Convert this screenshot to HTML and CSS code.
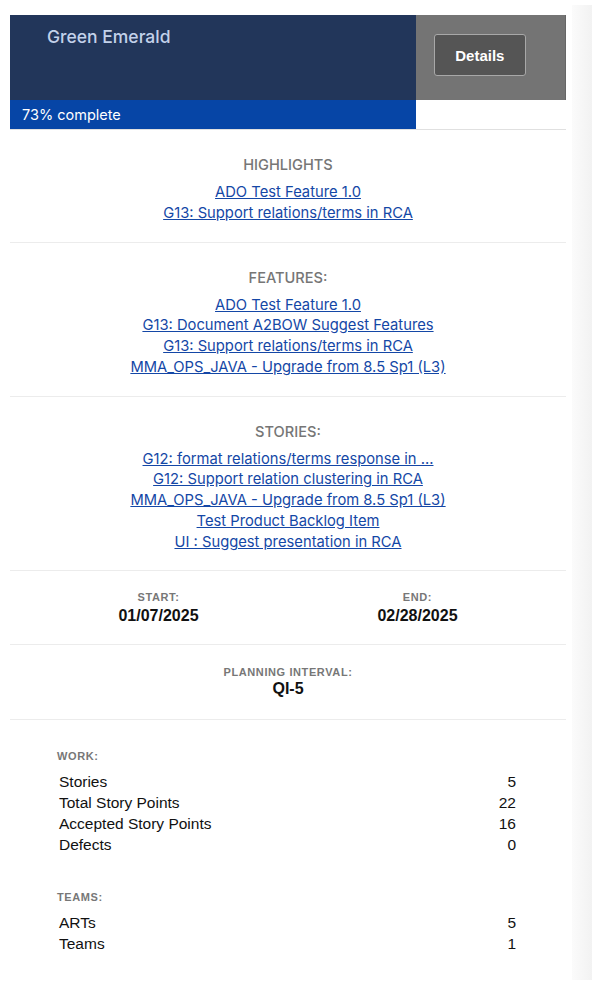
FILE: index.html
```html
<!DOCTYPE html>
<html lang="en">
<head>
<meta charset="utf-8">
<title>Green Emerald</title>
<link rel="stylesheet" href="styles.css">
</head>
<body>
<div class="page">
  <main class="card">
    <header class="header">
      <div class="title">Green Emerald</div>
      <div class="actions"><button class="btn" type="button">Details</button></div>
    </header>
    <div class="progress">
      <div class="bar" style="width: 73%">73% complete</div>
    </div>

    <section class="block">
      <h2 class="heading">HIGHLIGHTS</h2>
      <ul class="links">
        <li><a href="#">ADO Test Feature 1.0</a></li>
        <li><a href="#">G13: Support relations/terms in RCA</a></li>
      </ul>
    </section>

    <section class="block">
      <h2 class="heading">FEATURES:</h2>
      <ul class="links">
        <li><a href="#">ADO Test Feature 1.0</a></li>
        <li><a href="#">G13: Document A2BOW Suggest Features</a></li>
        <li><a href="#">G13: Support relations/terms in RCA</a></li>
        <li><a href="#">MMA_OPS_JAVA - Upgrade from 8.5 Sp1 (L3)</a></li>
      </ul>
    </section>

    <section class="block">
      <h2 class="heading">STORIES:</h2>
      <ul class="links">
        <li><a href="#">G12: format relations/terms response in ...</a></li>
        <li><a href="#">G12: Support relation clustering in RCA</a></li>
        <li><a href="#">MMA_OPS_JAVA - Upgrade from 8.5 Sp1 (L3)</a></li>
        <li><a href="#">Test Product Backlog Item</a></li>
        <li><a href="#">UI : Suggest presentation in RCA</a></li>
      </ul>
    </section>

    <section class="dates">
      <div class="field">
        <div class="label">START:</div>
        <div class="value">01/07/2025</div>
      </div>
      <div class="field">
        <div class="label">END:</div>
        <div class="value">02/28/2025</div>
      </div>
    </section>

    <section class="interval">
      <div class="field">
        <div class="label">PLANNING INTERVAL:</div>
        <div class="value">QI-5</div>
      </div>
    </section>

    <section class="stats">
      <div class="group">
        <div class="label">WORK:</div>
        <dl class="rows">
          <div class="row"><dt>Stories</dt><dd>5</dd></div>
          <div class="row"><dt>Total Story Points</dt><dd>22</dd></div>
          <div class="row"><dt>Accepted Story Points</dt><dd>16</dd></div>
          <div class="row"><dt>Defects</dt><dd>0</dd></div>
        </dl>
      </div>
      <div class="group">
        <div class="label">TEAMS:</div>
        <dl class="rows">
          <div class="row"><dt>ARTs</dt><dd>5</dd></div>
          <div class="row"><dt>Teams</dt><dd>1</dd></div>
        </dl>
      </div>
    </section>
  </main>
  <aside class="strip"></aside>
</div>
</body>
</html>
```

FILE: styles.css
```css
* { box-sizing: border-box; }

html, body {
  margin: 0;
  padding: 0;
  background: #ffffff;
}

body {
  font-family: Inter, "Liberation Sans", Arial, sans-serif;
  color: #111;
}

.page {
  display: flex;
  align-items: flex-start;
}

.card {
  width: 556px;
  margin-left: 10px;
  padding-top: 15px;
}

.strip {
  width: 20px;
  height: 975px;
  margin-top: 5px;
  margin-left: 6px;
  background: linear-gradient(to right, #fbfbfb, #f2f2f2);
}

/* header */
.header {
  display: grid;
  grid-template-columns: 73% 1fr;
  height: 85px;
}

.title {
  background: #22365a;
  color: #c3d1ea;
  font-size: 17.5px;
  font-weight: 500;
  line-height: 20px;
  padding: 12px 0 0 37px;
}

.actions {
  background: #747474;
  border-right: 1px solid #666;
  padding: 19px 0 0 18px;
}

.btn {
  width: 92px;
  height: 42px;
  background: #555555;
  border: 1px solid #a8a8a8;
  border-radius: 3px;
  color: #fff;
  font-family: "Liberation Sans", Arial, sans-serif;
  font-weight: 700;
  font-size: 15px;
  padding: 0;
}

.progress {
  height: 30px;
  border-bottom: 1px solid #e0e0e0;
}

.bar {
  height: 29px;
  background: #0645a6;
  color: #fff;
  font-size: 14.5px;
  line-height: 29px;
  padding-left: 12px;
  white-space: nowrap;
}

/* link blocks */
.block {
  padding: 25px 0 18px;
  border-bottom: 1px solid #ececec;
  text-align: center;
}

.heading {
  margin: 0 0 7px;
  font-size: 14.6px;
  font-weight: 500;
  line-height: 20px;
  color: #767676;
}

.links {
  list-style: none;
  margin: 0;
  padding: 0;
}

.links li {
  line-height: 20.75px;
  font-size: 14.75px;
}

.links a {
  color: #1447a6;
  text-decoration: underline;
}

/* fields */
.label {
  font-family: "Liberation Sans", Arial, sans-serif;
  font-size: 11px;
  font-weight: 700;
  line-height: 14px;
  letter-spacing: 0.6px;
  color: #777;
}

.value {
  font-family: "Liberation Sans", Arial, sans-serif;
  font-size: 16px;
  font-weight: 700;
  line-height: 20px;
  margin-top: 2px;
  color: #111;
}

.dates {
  display: grid;
  grid-template-columns: 1fr 1fr;
  padding: 19px 19px 18px;
  border-bottom: 1px solid #ececec;
  text-align: center;
}

.interval {
  padding: 20px 0 20px;
  border-bottom: 1px solid #ececec;
  text-align: center;
}

.interval .value { margin-top: 0; }

/* stats */
.stats {
  padding: 29px 50px 0 47px;
  display: flex;
  flex-direction: column;
  gap: 35.5px;
}

.rows {
  margin: 7.5px 0 0 2px;
  padding: 0;
}

.row {
  display: flex;
  justify-content: space-between;
  font-family: "Liberation Sans", Arial, sans-serif;
  font-size: 15.5px;
  line-height: 21px;
  color: #111;
}

.row dt, .row dd { margin: 0; }
```
